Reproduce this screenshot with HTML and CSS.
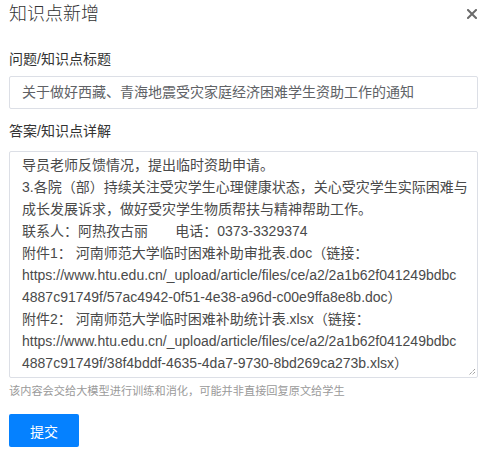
FILE: index.html
```html
<!DOCTYPE html>
<html lang="zh">
<head>
<meta charset="utf-8">
<title>知识点新增</title>
<link rel="stylesheet" href="styles.css">
</head>
<body>
<div class="dialog">
  <div class="header">
    <div class="title">知识点新增</div>
    <div class="close" aria-label="关闭">
      <svg width="10" height="10" viewBox="0 0 10 10"><path d="M1 1L9 9M9 1L1 9" stroke="#6b6b6b" stroke-width="2" stroke-linecap="square"/></svg>
    </div>
  </div>
  <div class="label label-first">问题/知识点标题</div>
  <div class="input">关于做好西藏、青海地震受灾家庭经济困难学生资助工作的通知</div>
  <div class="label label-second">答案/知识点详解</div>
  <div class="textarea">
    <div class="line">导员老师反馈情况，提出临时资助申请。</div>
    <div class="line">3.各院（部）持续关注受灾学生心理健康状态，关心受灾学生实际困难与</div>
    <div class="line">成长发展诉求，做好受灾学生物质帮扶与精神帮助工作。</div>
    <div class="line">联系人：阿热孜古丽&nbsp;&nbsp;&nbsp;&nbsp;&nbsp;&nbsp;&nbsp;电话：0373-3329374</div>
    <div class="line">附件1：&nbsp;河南师范大学临时困难补助审批表.doc（链接：</div>
    <div class="line">https://www.htu.edu.cn/_upload/article/files/ce/a2/2a1b62f041249bdbc</div>
    <div class="line">4887c91749f/57ac4942-0f51-4e38-a96d-c00e9ffa8e8b.doc）</div>
    <div class="line">附件2：&nbsp;河南师范大学临时困难补助统计表.xlsx（链接：</div>
    <div class="line">https://www.htu.edu.cn/_upload/article/files/ce/a2/2a1b62f041249bdbc</div>
    <div class="line">4887c91749f/38f4bddf-4635-4da7-9730-8bd269ca273b.xlsx）</div>
    <svg class="grip" width="8" height="8" viewBox="0 0 8 8"><path d="M7 1L1 7M7 4L4 7" stroke="#777" stroke-width="1" stroke-dasharray="1 1"/></svg>
  </div>
  <div class="hint">该内容会交给大模型进行训练和消化，可能并非直接回复原文给学生</div>
  <button class="submit">提交</button>
</div>
</body>
</html>
```
FILE: styles.css
```css
html, body {
  margin: 0;
  padding: 0;
  background: #ffffff;
}
body {
  font-family: "Liberation Sans", "Noto Sans CJK SC", sans-serif;
  color: #333333;
}
.dialog {
  padding: 0 8px 0 9px;
}
.header {
  display: flex;
  justify-content: space-between;
  align-items: center;
  height: 28px;
}
.title {
  font-size: 18px;
  line-height: 28px;
  font-weight: 300;
  color: #333333;
}
.close {
  display: flex;
  align-items: center;
  margin-right: 1px;
}
.label {
  font-size: 14px;
  line-height: 22px;
  color: #333333;
}
.label-first {
  margin-top: 20px;
}
.label-second {
  margin-top: 11px;
}
.input {
  margin-top: 6px;
  height: 31px;
  border: 1px solid #dcdfe6;
  border-radius: 2px;
  padding: 0 12px;
  font-size: 14px;
  line-height: 31px;
  color: #606266;
  white-space: nowrap;
}
.textarea {
  position: relative;
  margin-top: 9px;
  height: 223px;
  border: 1px solid #dcdfe6;
  border-radius: 2px;
  padding: 2px 12px 0 12px;
  font-size: 14px;
  line-height: 22px;
  color: #4a4a4a;
  overflow: hidden;
}
.line {
  white-space: nowrap;
}
.grip {
  position: absolute;
  right: 1px;
  bottom: 1px;
}
.hint {
  margin-top: 4px;
  font-size: 11.2px;
  line-height: 18px;
  color: #9a9a9a;
  white-space: nowrap;
}
.submit {
  display: block;
  margin-top: 14px;
  width: 70px;
  height: 33px;
  border: none;
  border-radius: 2px;
  background: #0581ff;
  color: #ffffff;
  font-family: "Liberation Sans", "Noto Sans CJK SC", sans-serif;
  font-size: 14px;
  padding: 0;
}
```
